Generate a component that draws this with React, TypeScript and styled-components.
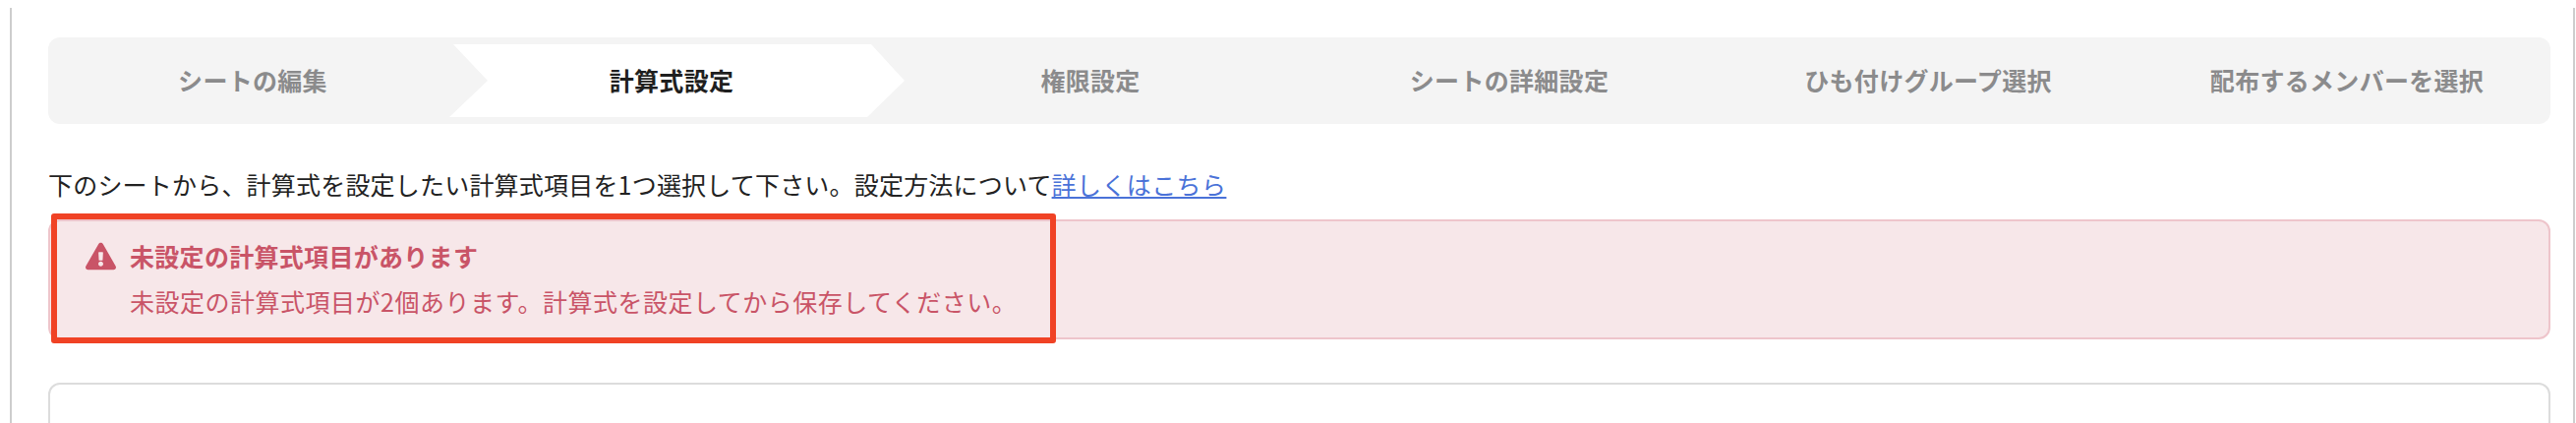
import React from "react";
import styled, { createGlobalStyle } from "styled-components";
import { FaExclamationTriangle } from "react-icons/fa";

const Global = createGlobalStyle`
  html, body { margin: 0; padding: 0; background: #fff; }
  body { height: 430px; overflow: hidden; font-family: "Noto Sans CJK JP", "Noto Sans", sans-serif; }
`;

const Panel = styled.main`
  margin: 8px 1px 0 10px;
  height: 422px;
  overflow: hidden;
  box-sizing: border-box;
  border-left: 2px solid #cdcdcd;
  border-right: 2px solid #cdcdcd;
  padding: 30px 23px 0 37px;
`;

const Stepper = styled.ol`
  margin: 0 0 43px;
  padding: 7px 0;
  list-style: none;
  height: 88px;
  box-sizing: border-box;
  border-radius: 12px;
  background: #f4f4f4;
  display: grid;
  grid-template-columns: repeat(6, 426px);
`;

const Step = styled.li<{ $active?: boolean }>`
  position: relative;
  transform: translateX(-5px);
  display: flex;
  align-items: center;
  justify-content: center;
  padding-bottom: 2px;
  font-size: 25px;
  font-weight: 700;
  letter-spacing: 0.3px;
  color: ${(p) => (p.$active ? "#1f1f1f" : "#8b8b8c")};

  ${(p) =>
    p.$active &&
    `
    &::before {
      content: "";
      position: absolute;
      top: 0;
      bottom: 0;
      left: -13px;
      right: -24px;
      background: #fff;
      clip-path: polygon(4px 0, 429px 0, 463px 50%, 425px 100%, 0 100%, 39px 50%);
    }
  `}
`;

const StepLabel = styled.span`
  position: relative;
`;

const Instruction = styled.p`
  margin: 0 0 18px;
  font-size: 25px;
  line-height: 36px;
  color: #222;
  letter-spacing: 0.2px;
`;

const HelpLink = styled.a`
  color: #4a72d8;
  text-decoration: underline;
  letter-spacing: 0.4px;
`;

const Alert = styled.section`
  position: relative;
  height: 122px;
  box-sizing: border-box;
  border: 2px solid #eec5cb;
  border-radius: 12px;
  background: #f7e7e9;
  padding: 17px 36px;
  color: #c95467;
  font-size: 25px;
  line-height: 36px;
`;

const AlertTitle = styled.h3`
  margin: 0 0 10px;
  display: flex;
  align-items: center;
  gap: 14px;
  font-size: 25px;
  font-weight: 700;
  letter-spacing: 0.3px;
`;

const AlertBody = styled.p`
  margin: 0 0 0 45px;
  letter-spacing: 0.5px;
`;

const Highlight = styled.div`
  position: absolute;
  top: -8px;
  left: 1px;
  width: 1022px;
  height: 132px;
  box-sizing: border-box;
  border: 6px solid #f04225;
  border-radius: 3px;
`;

const Card = styled.section`
  margin-top: 44px;
  height: 200px;
  border: 2px solid #dcdcdc;
  border-radius: 12px;
  background: #fff;
`;

const steps = ["シートの編集", "計算式設定", "権限設定", "シートの詳細設定", "ひも付けグループ選択", "配布するメンバーを選択"];

export default function App() {
  return (
    <>
      <Global />
      <Panel>
        <Stepper>
          {steps.map((s, i) => (
            <Step key={s} $active={i === 1}>
              <StepLabel>{s}</StepLabel>
            </Step>
          ))}
        </Stepper>
        <Instruction>
          下のシートから、計算式を設定したい計算式項目を1つ選択して下さい。設定方法について
          <HelpLink href="#">詳しくはこちら</HelpLink>
        </Instruction>
        <Alert>
          <AlertTitle>
            <FaExclamationTriangle size={31} />
            未設定の計算式項目があります
          </AlertTitle>
          <AlertBody>未設定の計算式項目が2個あります。計算式を設定してから保存してください。</AlertBody>
          <Highlight />
        </Alert>
        <Card />
      </Panel>
    </>
  );
}
